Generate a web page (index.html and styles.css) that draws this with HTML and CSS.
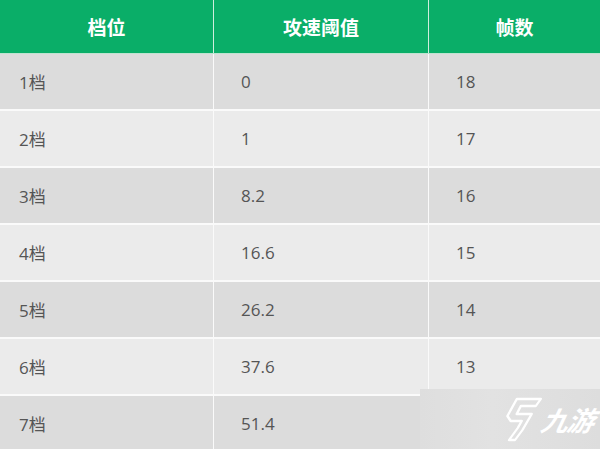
FILE: index.html
```html
<!DOCTYPE html>
<html>
<head>
<meta charset="utf-8">
<link rel="stylesheet" href="styles.css">
</head>
<body>
<div class="wrap">
<table class="tbl">
<thead>
<tr><th class="c1">档位</th><th class="c2">攻速阈值</th><th class="c3">帧数</th></tr>
</thead>
<tbody>
<tr><td class="first">1档</td><td>0</td><td>18</td></tr>
<tr><td class="first">2档</td><td>1</td><td>17</td></tr>
<tr><td class="first">3档</td><td>8.2</td><td>16</td></tr>
<tr><td class="first">4档</td><td>16.6</td><td>15</td></tr>
<tr><td class="first">5档</td><td>26.2</td><td>14</td></tr>
<tr><td class="first">6档</td><td>37.6</td><td>13</td></tr>
<tr><td class="first">7档</td><td>51.4</td><td>12</td></tr>
</tbody>
</table>
<div class="mark">
  <svg class="logo" width="40" height="48" viewBox="0 0 40 48">
    <path d="M12 4 L36 4 L32 11 L17 11 L14 19 L29 19 L22 35 L16 45 L10 45 L17 33 L20 26 L9 26 L5 21 Z" fill="none" stroke="#fff" stroke-width="2.4" stroke-linejoin="round"/>
  </svg>
  <span class="mtext">九游</span>
</div>
</div>
</body>
</html>
```
FILE: styles.css
```css
html, body { margin: 0; padding: 0; }
body { width: 600px; height: 449px; overflow: hidden; background: #ececec;
  font-family: "Open Sans", "Noto Sans CJK SC", sans-serif; }
.wrap { position: relative; width: 600px; height: 449px; overflow: hidden; }
.tbl { border-collapse: collapse; width: 600px; table-layout: fixed; }
.tbl th { background: #0aae68; color: #fff; font-weight: bold; font-size: 19px;
  height: 53px; padding: 0; text-align: center; border-right: 1px solid #cfeedd;
  border-bottom: 1px solid #bfe3d0; }
.tbl th.c3 { border-right: none; }
.c1 { width: 213px; }
.c2 { width: 214px; }
.tbl td { height: 55px; padding: 0 0 0 27px; font-size: 17px; color: #555;
  border-right: 1px solid #fafafa; border-bottom: 2px solid #fafafa; }
.tbl td.first { padding-left: 19px; }
.tbl td:last-child { border-right: none; }
.tbl tbody tr:nth-child(odd) td { background: #dcdcdc; }
.tbl tbody tr:nth-child(even) td { background: #ebebeb; }
.mark { position: absolute; left: 420px; top: 389px; width: 180px; height: 60px;
  background: linear-gradient(90deg, #dedede, #e2e2e2 40%, #dddddd);
  display: flex; align-items: center; justify-content: flex-end; padding-right: 6px; box-sizing: border-box; gap: 0; }
.logo { transform: skewX(-8deg); }
.mtext { color: #fff; font-size: 27px; font-style: italic; font-weight: bold; letter-spacing: -1px;
  font-family: "Noto Sans CJK SC", sans-serif; transform: skewX(-12deg); }
```
